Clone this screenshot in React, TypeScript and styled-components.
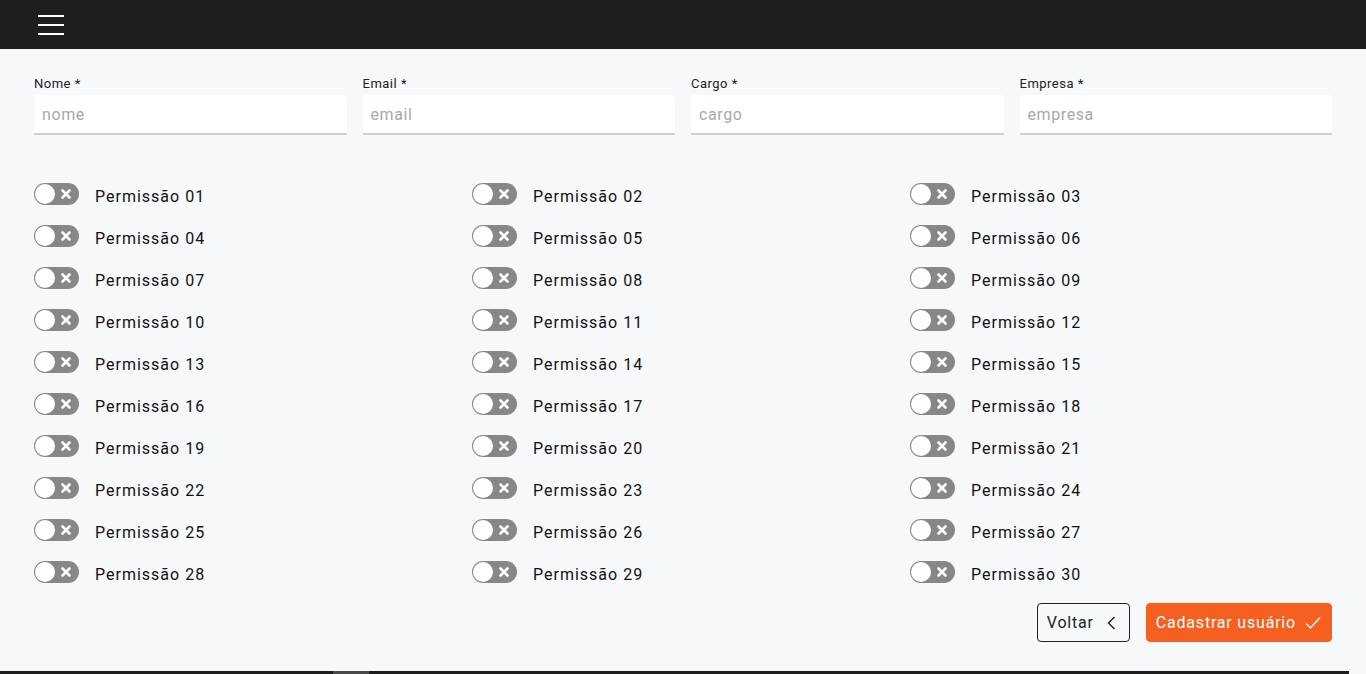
import React from 'react'
import styled, { createGlobalStyle } from 'styled-components'

const GlobalStyle = createGlobalStyle`
  html, body {
    margin: 0;
    padding: 0;
    background: #f7f8fa;
    font-family: Roboto, 'Liberation Sans', sans-serif;
    overflow: hidden;
  }
  * {
    box-sizing: border-box;
  }
`

const Page = styled.div`
  width: 1366px;
  height: 674px;
  display: flex;
  flex-direction: column;
  overflow: hidden;
`

const Header = styled.header`
  height: 49px;
  flex-shrink: 0;
  background: #1e1e1e;
  display: flex;
  align-items: center;
  padding-left: 38px;
`

const MenuButton = styled.button`
  width: 26px;
  height: 20px;
  padding: 0;
  border: none;
  background: transparent;
  display: flex;
  flex-direction: column;
  justify-content: space-between;
  cursor: pointer;
  span {
    display: block;
    height: 2px;
    background: #fff;
  }
`

const Main = styled.main`
  padding: 26px 34px 29px;
  display: flex;
  flex-direction: column;
`

const Fields = styled.div`
  display: grid;
  grid-template-columns: repeat(4, 1fr);
  column-gap: 16px;
`

const Field = styled.label`
  display: flex;
  flex-direction: column;
`

const Label = styled.span`
  font-size: 13px;
  line-height: 17px;
  color: #222;
  letter-spacing: 0.5px;
  margin-bottom: 3px;
`

const Input = styled.input`
  height: 40px;
  border: none;
  border-bottom: 2px solid #cfcfcf;
  border-radius: 3px 3px 0 0;
  background: #fff;
  padding: 0 8px;
  font-family: inherit;
  font-size: 16px;
  letter-spacing: 0.6px;
  color: #222;
  outline: none;
  &::placeholder {
    color: #a9a9a9;
  }
`

const Permissions = styled.div`
  margin-top: 40px;
  display: grid;
  grid-template-columns: repeat(3, 1fr);
  column-gap: 16px;
`

const PermissionRow = styled.label`
  height: 42px;
  display: flex;
  align-items: center;
  gap: 16px;
  font-size: 16px;
  letter-spacing: 1px;
  color: #111;
`

const Track = styled.span<{ $on?: boolean }>`
  position: relative;
  width: 45px;
  height: 22px;
  border-radius: 11px;
  background: ${p => (p.$on ? '#f26522' : '#878787')};
  flex-shrink: 0;
  margin-top: -4px;
`

const Knob = styled.span`
  position: absolute;
  left: 1px;
  top: 1px;
  width: 20px;
  height: 20px;
  border-radius: 50%;
  background: #fff;
`

const Cross = styled.svg`
  position: absolute;
  right: 7px;
  top: 5px;
`

const Actions = styled.div`
  margin-top: 8px;
  display: flex;
  justify-content: flex-end;
  gap: 16px;
`

const Button = styled.button<{ $primary?: boolean }>`
  height: 39px;
  padding: 0 9px;
  display: flex;
  align-items: center;
  gap: ${p => (p.$primary ? '8px' : '10px')};
  border-radius: 4px;
  font-family: inherit;
  font-size: 16px;
  letter-spacing: 0.8px;
  cursor: pointer;
  border: 1px solid ${p => (p.$primary ? '#f56021' : '#222')};
  background: ${p => (p.$primary ? '#f56021' : 'transparent')};
  color: ${p => (p.$primary ? '#fff' : '#222')};
`

const Footer = styled.footer`
  flex: 1;
  background: #1e1e1e;
  margin-right: 17px;
  position: relative;
  &::after {
    content: '';
    position: absolute;
    left: 333px;
    top: 0;
    width: 36px;
    height: 100%;
    background: #4a4a4a;
  }
`

const fields = [
  { label: 'Nome', placeholder: 'nome' },
  { label: 'Email', placeholder: 'email' },
  { label: 'Cargo', placeholder: 'cargo' },
  { label: 'Empresa', placeholder: 'empresa' },
]

const permissions = Array.from({ length: 30 }, (_, i) => `Permissão ${String(i + 1).padStart(2, '0')}`)

const Toggle = () => (
  <Track>
    <Knob />
    <Cross width="12" height="12" viewBox="0 0 12 12">
      <path d="M2.5 2.5 L9.5 9.5 M9.5 2.5 L2.5 9.5" stroke="#fff" strokeWidth="2.6" strokeLinecap="round" />
    </Cross>
  </Track>
)

export default function App() {
  return (
    <Page>
      <GlobalStyle />
      <Header>
        <MenuButton aria-label="menu">
          <span />
          <span />
          <span />
        </MenuButton>
      </Header>
      <Main>
        <Fields>
          {fields.map(f => (
            <Field key={f.label}>
              <Label>{f.label} *</Label>
              <Input placeholder={f.placeholder} />
            </Field>
          ))}
        </Fields>
        <Permissions>
          {permissions.map(p => (
            <PermissionRow key={p}>
              <Toggle />
              {p}
            </PermissionRow>
          ))}
        </Permissions>
        <Actions>
          <Button>
            Voltar
            <svg width="16" height="16" viewBox="0 0 16 16" fill="none">
              <path d="M10.5 2 L4.5 8 L10.5 14" stroke="#222" strokeWidth="1.4" />
            </svg>
          </Button>
          <Button $primary>
            Cadastrar usuário
            <svg width="18" height="16" viewBox="0 0 18 16" fill="none">
              <path d="M2 8.5 L6.5 13 L16 2.5" stroke="#fff" strokeWidth="1.4" />
            </svg>
          </Button>
        </Actions>
      </Main>
      <Footer />
    </Page>
  )
}
